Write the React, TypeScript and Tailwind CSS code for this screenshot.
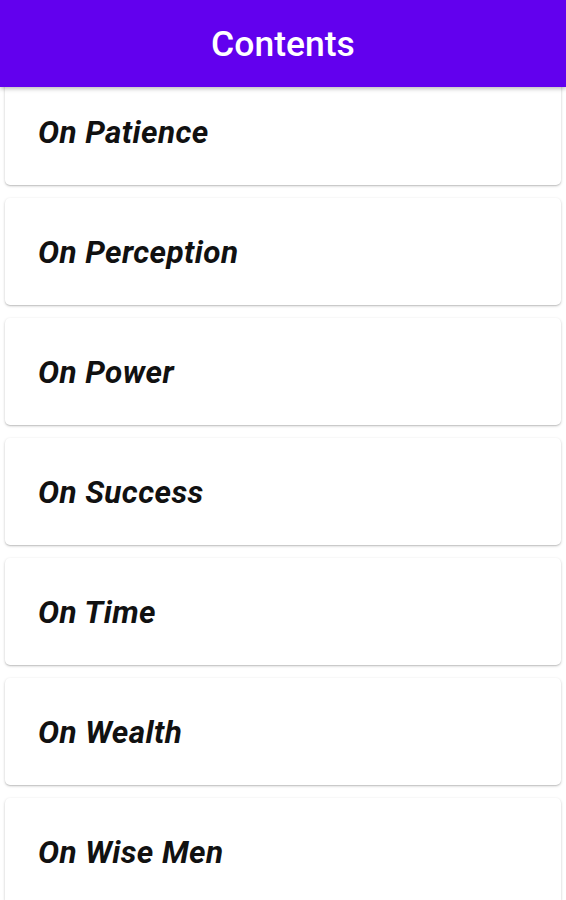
const chapters = [
  "On Patience",
  "On Perception",
  "On Power",
  "On Success",
  "On Time",
  "On Wealth",
  "On Wise Men",
];

export default function App() {
  return (
    <div
      className="relative h-[900px] overflow-hidden bg-white"
      style={{ fontFamily: "Roboto, 'Liberation Sans', sans-serif" }}
    >
      <header className="absolute inset-x-0 top-0 z-10 flex h-[87px] items-center justify-center bg-[#6200ee] pt-[3px] shadow-[0_2px_4px_rgba(0,0,0,0.25)]">
        <h1 className="text-[35.5px] font-medium text-white">Contents</h1>
      </header>

      <div className="flex flex-col gap-[13px] px-[5px] pt-[78px]">
        {chapters.map((title) => (
          <div
            key={title}
            className="flex h-[107px] shrink-0 items-center rounded-[5px] bg-white pl-[33px] pt-[3px] shadow-[0_1px_3px_rgba(0,0,0,0.2),0_1px_1px_rgba(0,0,0,0.1)]"
          >
            <span className="text-[31.5px] font-bold italic tracking-[0.4px] text-[#111]">{title}</span>
          </div>
        ))}
      </div>
    </div>
  );
}
